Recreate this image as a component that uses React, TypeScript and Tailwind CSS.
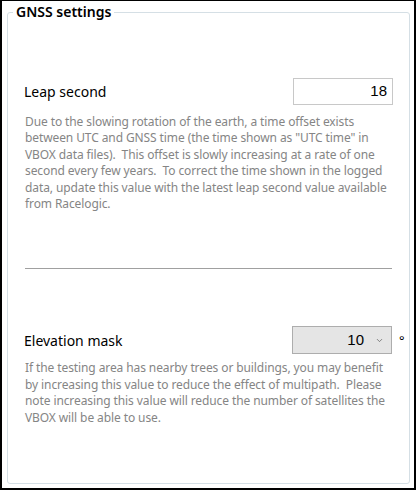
import { ChevronDown } from 'lucide-react';

const ui = "font-['Segoe_UI','Noto_Sans',sans-serif]";

const LeapSecond = () => (
  <div>
    <div className="flex items-center justify-between pl-[16px] pr-[16px]">
      <span className="text-[14px] text-black">Leap second</span>
      <div className="w-[100px] h-[27px] border border-[#c8c8c8] bg-white flex items-center justify-end pr-[5px] font-['Liberation_Sans',sans-serif] text-[15px] text-black">
        18
      </div>
    </div>
    <p className="mt-[9px] pl-[17px] pr-[16px] text-[12px] tracking-[-0.1px] leading-[16.4px] text-[#858585]">
      Due to the slowing rotation of the earth, a time offset exists between UTC and GNSS time (the time shown as "UTC time" in VBOX data files).&nbsp; This offset is slowly increasing at a rate of one second every few years.&nbsp; To correct the time shown in the logged data, update this value with the latest leap second value available from Racelogic.
    </p>
  </div>
);

const ElevationMask = () => (
  <div>
    <div className="flex items-center pl-[16px]">
      <span className="flex-1 text-[14px] text-black">Elevation mask</span>
      <div className="w-[100px] h-[28px] border border-[#adadad] bg-[#e5e5e5] flex items-center justify-end pr-[7px]">
        <span className="font-['Liberation_Sans',sans-serif] text-[15px] text-black">10</span>
        <ChevronDown size={9} strokeWidth={2} className="ml-[11px] text-[#606060]" />
      </div>
      <span className="w-[17px] pl-[7px] text-[13px] text-black">°</span>
    </div>
    <p className="mt-[6px] pl-[17px] pr-[16px] text-[12px] tracking-[-0.1px] leading-[16.4px] text-[#858585]">
      If the testing area has nearby trees or buildings, you may benefit by increasing this value to reduce the effect of multipath.&nbsp; Please note increasing this value will reduce the number of satellites the VBOX will be able to use.
    </p>
  </div>
);

export default function App() {
  return (
    <div className={`w-[416px] h-[490px] bg-white border-t border-x-2 border-b-2 border-black flex ${ui}`}>
      <fieldset className="flex-1 ml-[5px] mr-[4px] mb-[4px] border border-[#d5dfe5] rounded-[3px] flex flex-col">
        <legend className="ml-[5px] px-[3px] text-[14px] font-semibold leading-[22px] text-black">GNSS settings</legend>
        <div className="pt-[55px]">
          <LeapSecond />
        </div>
        <div className="mt-[56px] mx-[17px] h-px bg-[#a0a0a0]" />
        <div className="mt-[57px]">
          <ElevationMask />
        </div>
      </fieldset>
    </div>
  );
}
